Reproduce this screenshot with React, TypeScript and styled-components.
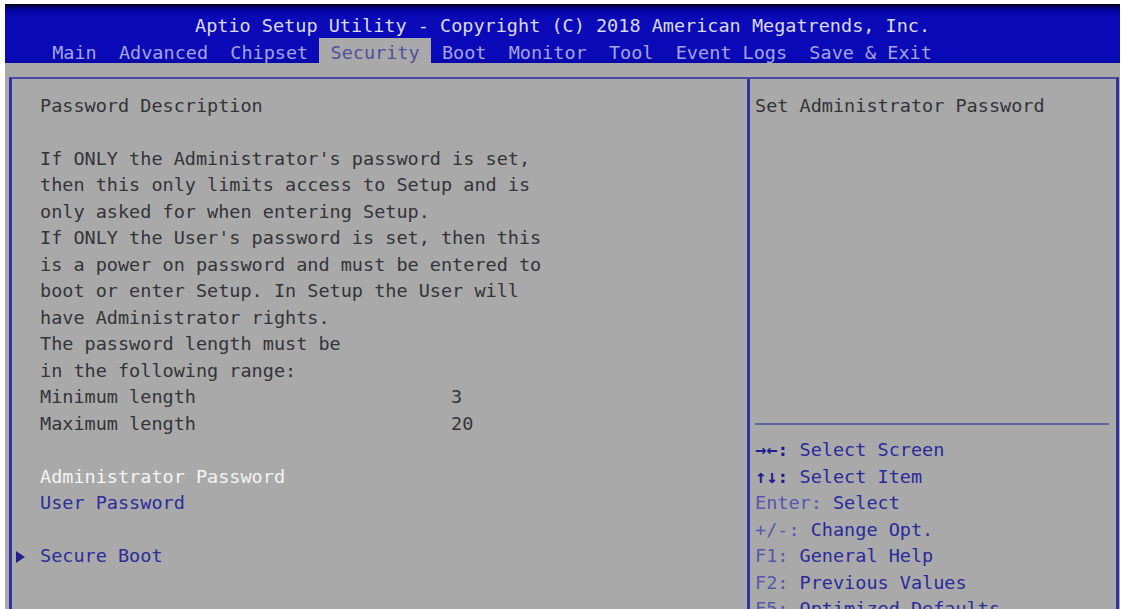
import React from "react";
import styled, { createGlobalStyle } from "styled-components";

const GlobalStyle = createGlobalStyle`
  html, body {
    margin: 0;
    padding: 0;
    background: #ffffff;
    overflow: hidden;
  }
  body {
    font-family: "DejaVu Sans Mono", "Liberation Mono", monospace;
    font-size: 18.5px;
  }
`;

const ROW = 26.5;

const Screen = styled.div`
  margin: 4px 3px 0 5px;
  height: 605px;
  background: #a9a9a9;
  overflow: hidden;
  display: flex;
  flex-direction: column;
  font-family: "DejaVu Sans Mono", "Liberation Mono", monospace;
  font-size: 18.5px;
`;

const Header = styled.header`
  box-sizing: border-box;
  height: 59px;
  padding-top: 9px;
  background: linear-gradient(
    to bottom,
    #02021a 0px,
    #0404a4 6px,
    #0a0ab8 14px,
    #0a0ab8 52px,
    #0808a6 59px
  );
  flex: none;
`;

const Title = styled.div`
  height: 25px;
  line-height: 25px;
  padding-left: 190px;
  color: #dadaf4;
  white-space: pre;
`;

const Tabs = styled.nav`
  display: flex;
  height: 25px;
  padding-left: 36px;
`;

const Tab = styled.div<{ $active?: boolean }>`
  box-sizing: border-box;
  height: 25px;
  padding: 4px 1ch 0;
  line-height: 21px;
  white-space: pre;
  color: ${(p) => (p.$active ? "#50509e" : "#a4a4e6")};
  background: ${(p) => (p.$active ? "#a9a9a9" : "transparent")};
`;

const Frame = styled.div`
  flex: 1;
  margin: 14px 1px 0 4px;
  display: flex;
  border-top: 2px solid #4a4aa6;
  border-left: 3px solid #3434a0;
  border-right: 3px solid #3434a0;
`;

const LeftPanel = styled.section`
  box-sizing: border-box;
  width: 738px;
  flex: none;
  padding: 13.75px 0 0 4px;
  border-right: 3px solid #34349c;
`;

const RightPanel = styled.aside`
  flex: 1;
  padding: 13.75px 4px 0 5px;
  display: flex;
  flex-direction: column;
`;

type Tone = "text" | "selected" | "link";

const toneColor: Record<Tone, string> = {
  text: "#343438",
  selected: "#f4f4f4",
  link: "#2c2c9c",
};

const Row = styled.div<{ $tone?: Tone }>`
  display: grid;
  grid-template-columns: 24px 411px auto;
  height: ${ROW}px;
  line-height: ${ROW}px;
  white-space: pre;
  color: ${(p) => toneColor[p.$tone ?? "text"]};
`;

const Marker = styled.span`
  display: flex;
  align-items: center;
`;

const Triangle = styled.span`
  width: 0;
  height: 0;
  border-top: 6px solid transparent;
  border-bottom: 6px solid transparent;
  border-left: 9px solid #20208e;
`;

const Label = styled.span<{ $wide?: boolean }>`
  grid-column: ${(p) => (p.$wide ? "2 / 4" : "2")};
`;

const Value = styled.span`
  grid-column: 3;
`;

const HelpTop = styled.div`
  height: 330.25px;
  flex: none;
`;

const HelpLine = styled.div<{ $tone?: Tone }>`
  height: ${ROW}px;
  line-height: ${ROW}px;
  white-space: pre;
  color: ${(p) => toneColor[p.$tone ?? "text"]};
`;

const Divider = styled.div`
  height: 2px;
  flex: none;
  margin-right: 3px;
  background: #62629c;
`;

const Keys = styled.div`
  margin-top: 12.25px;
`;

const Key = styled.span<{ $strong?: boolean }>`
  color: ${(p) => (p.$strong ? "#1e1e8c" : "#5656ae")};
  font-weight: ${(p) => (p.$strong ? 700 : 400)};
`;

const Desc = styled.span`
  color: #2a2a9c;
`;

const tabs = [
  "Main",
  "Advanced",
  "Chipset",
  "Security",
  "Boot",
  "Monitor",
  "Tool",
  "Event Logs",
  "Save & Exit",
];

const description = [
  "Password Description",
  "",
  "If ONLY the Administrator's password is set,",
  "then this only limits access to Setup and is",
  "only asked for when entering Setup.",
  "If ONLY the User's password is set, then this",
  "is a power on password and must be entered to",
  "boot or enter Setup. In Setup the User will",
  "have Administrator rights.",
  "The password length must be",
  "in the following range:",
];

const keys: { key: string; desc: string; strong?: boolean }[] = [
  { key: "→←:", desc: " Select Screen", strong: true },
  { key: "↑↓:", desc: " Select Item", strong: true },
  { key: "Enter:", desc: " Select" },
  { key: "+/-:", desc: " Change Opt." },
  { key: "F1:", desc: " General Help" },
  { key: "F2:", desc: " Previous Values" },
  { key: "F5:", desc: " Optimized Defaults" },
];

export default function App() {
  return (
    <>
      <GlobalStyle />
      <Screen>
        <Header>
          <Title>Aptio Setup Utility - Copyright (C) 2018 American Megatrends, Inc.</Title>
          <Tabs>
            {tabs.map((t) => (
              <Tab key={t} $active={t === "Security"}>
                {t}
              </Tab>
            ))}
          </Tabs>
        </Header>
        <Frame>
          <LeftPanel>
            {description.map((line, i) => (
              <Row key={i}>
                <span />
                <Label $wide>{line}</Label>
              </Row>
            ))}
            <Row>
              <span />
              <Label>Minimum length</Label>
              <Value>3</Value>
            </Row>
            <Row>
              <span />
              <Label>Maximum length</Label>
              <Value>20</Value>
            </Row>
            <Row />
            <Row $tone="selected">
              <span />
              <Label $wide>Administrator Password</Label>
            </Row>
            <Row $tone="link">
              <span />
              <Label $wide>User Password</Label>
            </Row>
            <Row />
            <Row $tone="link">
              <Marker>
                <Triangle />
              </Marker>
              <Label $wide>Secure Boot</Label>
            </Row>
          </LeftPanel>
          <RightPanel>
            <HelpTop>
              <HelpLine>Set Administrator Password</HelpLine>
            </HelpTop>
            <Divider />
            <Keys>
              {keys.map((k) => (
                <HelpLine key={k.key}>
                  <Key $strong={k.strong}>{k.key}</Key>
                  <Desc>{k.desc}</Desc>
                </HelpLine>
              ))}
            </Keys>
          </RightPanel>
        </Frame>
      </Screen>
    </>
  );
}
